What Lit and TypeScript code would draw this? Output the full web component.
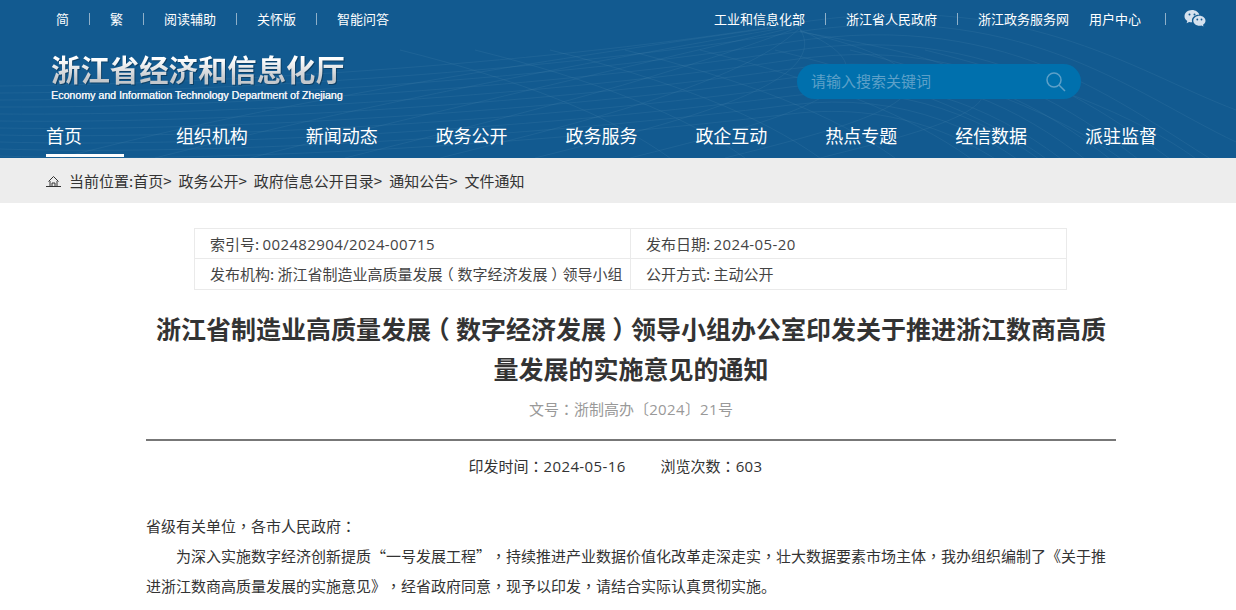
import { LitElement, html, css, svg } from "lit";
import { customElement } from "lit/decorators.js";

const nav = ["首页", "组织机构", "新闻动态", "政务公开", "政务服务", "政企互动", "热点专题", "经信数据", "派驻监督"];
const crumbs = ["政务公开", "政府信息公开目录", "通知公告"];

/* Digits use a wider Latin face, ，： a centred CJK variant, and （） sit centred in their cell, as in the reference. */
const fmt = (text: string) =>
  text.split(/([0-9]+(?:[-/][0-9]+)*|[，：（）])/).map((part) => {
    if (!part) return "";
    if (/^[0-9]/.test(part)) return html`<span class="n">${part}</span>`;
    if (part === "（" || part === "）") return html`<span class="paren">${part}</span>`;
    if (/^[，：]$/.test(part)) return html`<span class="tc">${part}</span>`;
    return part;
  });

const mesh = () => {
  const lines = [];
  for (let i = 0; i < 11; i++) {
    lines.push(svg`<path d="M0 ${86 + i * 7} C 230 ${84 + i * 8}, 560 ${62 + i * 8}, 790 ${24 + i * 9} S 1130 ${70 + i * 22}, 1236 ${110 + i * 32}"/>`);
  }
  for (let i = 0; i < 9; i++) {
    const x = 60 + i * 95;
    lines.push(svg`<path d="M${x} 158 C ${x + 130} 125, ${x + 300} 85, 800 ${24 + i}"/>`);
  }
  for (let i = 0; i < 8; i++) {
    const x = 400 + i * 75;
    lines.push(svg`<path d="M${x} 50 C ${x + 120} 80, ${x + 210} 115, ${x + 270} 158"/>`);
  }
  return lines;
};

@customElement("app-root")
export class AppRoot extends LitElement {
  static styles = css`
    :host {
      display: block;
      width: 1236px;
      height: 610px;
      overflow: hidden;
      background: #fff;
      font-family: "Noto Sans CJK SC", "Noto Sans", sans-serif;
      color: #333;
      text-spacing-trim: space-all;
    }
    .n {
      font-family: "Open Sans", sans-serif;
      letter-spacing: 0.38px;
    }
    .tc { font-family: "Noto Sans CJK TC", sans-serif; }
    .paren {
      font-feature-settings: "halt";
      padding: 0 0.25em;
    }
    .header {
      position: relative;
      height: 158px;
      background: #125a90;
      overflow: hidden;
    }
    .mesh {
      position: absolute;
      inset: 0;
      fill: none;
      stroke: #4d87b0;
      stroke-opacity: 0.2;
      stroke-width: 1;
    }
    .inner {
      position: relative;
      display: flex;
      flex-direction: column;
      height: 100%;
    }
    .top {
      display: flex;
      justify-content: space-between;
      align-items: center;
      height: 38px;
      padding: 0 30px 0 56px;
      font-size: 13px;
      color: #fff;
    }
    .links { display: flex; align-items: center; }
    .links span { line-height: 18px; }
    .sep {
      width: 1px;
      height: 12px;
      margin: 0 20px;
      background: #8fb0c9;
    }
    .gap { width: 20px; }
    .sep.last { margin: 0 18px 0 24px; }
    .wechat { display: block; }
    .brand {
      display: flex;
      justify-content: space-between;
      align-items: flex-start;
      height: 80px;
      padding: 0 155px 0 51px;
    }
    .logo { margin-top: 12px; }
    .logo-cn {
      font-size: 29.4px;
      font-weight: 700;
      line-height: 36px;
      white-space: nowrap;
      color: transparent;
      background: linear-gradient(#ffffff 25%, #c4c8cc 80%);
      -webkit-background-clip: text;
      background-clip: text;
      filter: drop-shadow(1px 1px 0.5px rgba(0, 0, 0, 0.3));
    }
    .logo-en {
      font-family: "Liberation Sans", sans-serif;
      font-size: 10.63px;
      line-height: 14px;
      margin-top: 2px;
      color: #f0f3f6;
      text-shadow: 0.3px 0 0 #f0f3f6;
      white-space: nowrap;
    }
    .search {
      display: flex;
      align-items: center;
      justify-content: space-between;
      width: 284px;
      height: 35px;
      margin-top: 26px;
      padding: 0 15px 2px 14px;
      box-sizing: border-box;
      border-radius: 18px;
      background: #0070ad;
      color: #5da0c8;
      font-size: 15px;
    }
    .search svg { margin-top: 2px; }
    .nav {
      display: flex;
      padding-left: 46px;
      color: #fff;
      font-size: 18px;
    }
    .nav a {
      flex: 0 0 129.875px;
      height: 40px;
      line-height: 34px;
      white-space: nowrap;
    }
    .nav a.on span {
      display: block;
      width: 78px;
      height: 39px;
      box-sizing: border-box;
      border-bottom: 3px solid #fff;
    }
    .crumb {
      display: flex;
      align-items: center;
      height: 45px;
      padding-left: 46px;
      background: #ededed;
      font-size: 15px;
      color: #333;
    }
    .crumb svg { display: block; margin-right: 8px; }
    .crumb i { font-style: normal; margin-right: 7px; white-space: nowrap; }
    .info {
      display: grid;
      grid-template-columns: 436px 1fr;
      width: 873px;
      margin: 25px 0 0 194px;
      box-sizing: border-box;
      border: 1px solid #eaeaea;
      font-size: 15px;
      color: #444;
    }
    .info div {
      height: 30px;
      line-height: 29px;
      padding-left: 15px;
      white-space: nowrap;
      overflow: hidden;
      box-sizing: border-box;
    }
    .info div:nth-child(odd) { border-right: 1px solid #eaeaea; }
    .info div:nth-child(-n + 2) { border-bottom: 1px solid #eaeaea; }
    .article { width: 970px; margin-left: 146px; }
    h1 {
      margin: 18px 0 0;
      font-size: 25px;
      line-height: 40px;
      font-weight: 700;
      text-align: center;
      color: #333;
    }
    .docno {
      margin-top: 9px;
      text-align: center;
      font-size: 15px;
      line-height: 24px;
      color: #999;
    }
    .meta {
      margin-top: 18px;
      padding: 13px 31px 0 0;
      border-top: 2px solid #777;
      display: flex;
      justify-content: center;
      gap: 35px;
      font-size: 15px;
      line-height: 24px;
    }
    .body {
      margin-top: 33px;
      font-size: 15px;
      line-height: 30px;
      color: #333;
    }
    .body p { margin: 0; }
    .body p.in { text-indent: 30px; }
  `;

  render() {
    return html`
      <div class="header">
        <svg class="mesh" width="1236" height="158" viewBox="0 0 1236 158">${mesh()}</svg>
        <div class="inner">
          <div class="top">
            <div class="links">
              <span>简</span><b class="sep"></b>
              <span>繁</span><b class="sep"></b>
              <span>阅读辅助</span><b class="sep"></b>
              <span>关怀版</span><b class="sep"></b>
              <span>智能问答</span>
            </div>
            <div class="links">
              <span>工业和信息化部</span><b class="sep"></b>
              <span>浙江省人民政府</span><b class="sep"></b>
              <span>浙江政务服务网</span><b class="gap"></b>
              <span>用户中心</span><b class="sep last"></b>
              <svg class="wechat" width="22" height="20" viewBox="0 0 22 20">
                <path fill="#d5e1ee" d="M8 1C3.8 1 .5 3.8.5 7.2c0 2 1.1 3.700 2.800 4.800l-.7 2.200 2.500-1.300c.8.2 1.600.4 2.500.4h.6c-.2-.6-.3-1.200-.3-1.800 0-3.200 3-5.700 6.800-5.700h.6C14.700 3.200 11.700 1 8 1z"/>
                <path fill="#d5e1ee" d="M21.500 11.700c0-2.800-2.800-5-6-5-3.400 0-6.200 2.200-6.200 5s2.800 5 6.200 5c.7 0 1.400-.1 2-.3l2 1.100-.5-1.800c1.500-1 2.500-2.400 2.500-4z"/>
                <circle cx="5.500" cy="5.500" r="1" fill="#125a90"/><circle cx="10.500" cy="5.500" r="1" fill="#125a90"/>
                <circle cx="13.300" cy="10.500" r=".9" fill="#125a90"/><circle cx="17.500" cy="10.500" r=".9" fill="#125a90"/>
              </svg>
            </div>
          </div>
          <div class="brand">
            <div class="logo">
              <div class="logo-cn">浙江省经济和信息化厅</div>
              <div class="logo-en">Economy and Information Technology Department of Zhejiang</div>
            </div>
            <div class="search">
              <span>请输入搜索关键词</span>
              <svg width="20" height="20" viewBox="0 0 20 20" fill="none" stroke="#5da0c8" stroke-width="1.500">
                <circle cx="8" cy="8" r="7"/><path d="M13 13 19 19"/>
              </svg>
            </div>
          </div>
          <div class="nav">
            ${nav.map((n, i) => html`<a class=${i === 0 ? "on" : ""}><span>${n}</span></a>`)}
          </div>
        </div>
      </div>
      <div class="crumb">
        <svg width="15" height="12" viewBox="0 0 15 12" fill="none" stroke="#333" stroke-width="1">
          <path d="M0 11.500h15M2.500 6.500 7.500 1.500l5 5M4 6v5.500M11 6v5.500M6 11.500V8h3v3.500"/>
        </svg>
        <i>当前位置:首页&gt;</i>
        ${crumbs.map((c) => html`<i>${c}&gt;</i>`)}
        <i>文件通知</i>
      </div>
      <div class="info">
        <div>索引号: ${fmt("002482904/2024-00715")}</div>
        <div>发布日期: ${fmt("2024-05-20")}</div>
        <div>发布机构: ${fmt("浙江省制造业高质量发展（数字经济发展）领导小组")}</div>
        <div>公开方式: 主动公开</div>
      </div>
      <div class="article">
        <h1>${fmt("浙江省制造业高质量发展（数字经济发展）领导小组办公室印发关于推进浙江数商高质")}${fmt("量发展的实施意见的通知")}</h1>
        <div class="docno">${fmt("文号：浙制高办〔2024〕21号")}</div>
        <div class="meta"><span>${fmt("印发时间：2024-05-16")}</span><span>${fmt("浏览次数：603")}</span></div>
        <div class="body">
          <p>${fmt("省级有关单位，各市人民政府：")}</p>
          <p class="in">${fmt("为深入实施数字经济创新提质“一号发展工程”，持续推进产业数据价值化改革走深走实，壮大数据要素市场主体，我办组织编制了《关于推")}${fmt("进浙江数商高质量发展的实施意见》，经省政府同意，现予以印发，请结合实际认真贯彻实施。")}</p>
        </div>
      </div>
    `;
  }
}
